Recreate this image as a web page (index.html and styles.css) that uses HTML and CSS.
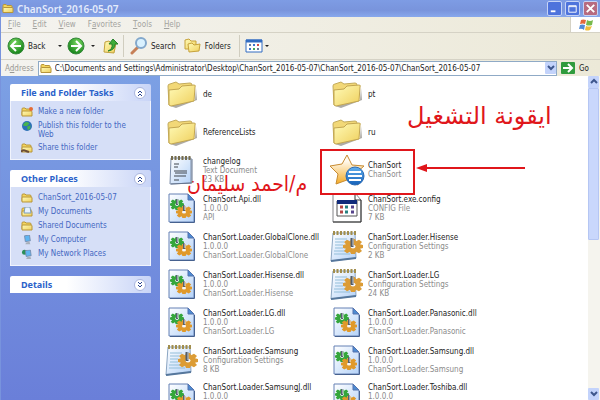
FILE: index.html
```html
<!DOCTYPE html>
<html lang="en">
  <head>
    <meta charset="UTF-8" />
    <title>ChanSort_2016-05-07</title>
    <link rel="stylesheet" href="styles.css">
  </head>
  <body>
    <!-- shared icons -->
    <svg class="defs" aria-hidden="true">
      <defs>
        <linearGradient id="yellow" x1="0" y1="0" x2="1" y2="1">
          <stop offset="0" stop-color="#fffbb8" />
          <stop offset="1" stop-color="#efcf5c" />
        </linearGradient>
        <linearGradient id="paper" x1="0" y1="0" x2="1" y2="1">
          <stop offset="0" stop-color="#ffffff" />
          <stop offset="1" stop-color="#b4d2f8" />
        </linearGradient>
        <radialGradient id="green" cx="0.4" cy="0.3" r="0.7">
          <stop offset="0" stop-color="#7ad860" />
          <stop offset="1" stop-color="#16841a" />
        </radialGradient>
        <linearGradient id="gold" x1="0" y1="0" x2="0" y2="1">
          <stop offset="0.2" stop-color="#fffaf0" />
          <stop offset="1" stop-color="#f5a81c" />
        </linearGradient>
        <linearGradient id="ball" x1="0" y1="0" x2="0" y2="1">
          <stop offset="0" stop-color="#62b0ee" />
          <stop offset="1" stop-color="#1560b8" />
        </linearGradient>
      </defs>
      <symbol id="folder" viewBox="0 0 32 30">
        <path d="M4 27 L29 21 L30 9 L31 21 L10 29Z" fill="#77736a" opacity="0.6" />
        <path d="M3 26 L2 7 Q2 5 4 5 L10 3 L13 5 L24 4 Q26 4 26 6 L27 20Z" fill="#f2d877" stroke="#c3ab5c" />
        <path d="M3 26 L3 11 L13 10 L16 7 L28 6 Q30 6 29 8 L28 22 L5 27Z" fill="url(#yellow)" stroke="#c3a650" />
      </symbol>
      <symbol id="mini-folder" viewBox="0 0 12 10">
        <path d="M1 8 V2 Q1 1 2 1 H4 L5 2 H9 Q10 2 10 3 V4" fill="#f4d55d" stroke="#b8963a" />
        <path d="M1 9 L1 5 Q1 4 2 4 H10 Q11 4 11 5 L11 9Z" fill="url(#yellow)" stroke="#b8963a" />
      </symbol>
      <symbol id="gear" viewBox="-10 -10 20 20" preserveAspectRatio="none">
        <path d="M-2 -10 H2 L3 -7 L6 -9 L9 -6 L7 -3 L10 -2 V2 L7 3 L9 6 L6 9 L3 7 L2 10 H-2 L-3 7 L-6 9 L-9 6 L-7 3 L-10 2 V-2 L-7 -3 L-9 -6 L-6 -9 L-3 -7Z" fill="currentColor" />
        <circle r="2.5" fill="#f5f7fb" />
      </symbol>
      <symbol id="dll" viewBox="0 0 32 30">
        <path d="M3 29 V1 H22 L28 7 V29Z" fill="url(#paper)" stroke="#6480b4" />
        <path d="M22 1 V7 H28Z" fill="#4c8bd2" stroke="#5573ae" />
        <path d="M28.5 8 V29.5 H4" fill="none" stroke="#46618f" />
        <use href="#gear" x="4" y="6" width="14" height="11" color="#35a63c" />
        <use href="#gear" x="10" y="13" width="16" height="12" color="#e0992a" />
        <path d="M11 6 V12 M18 12 V18" stroke="#566171" stroke-width="2" />
        <path d="M12 6 V11 M19 12 V17" stroke="#e4e9ef" />
      </symbol>
      <symbol id="text-file" viewBox="0 0 32 30">
        <path d="M5 3 H25 V28 L4 29Z" fill="url(#paper)" stroke="#7b8ca8" />
        <path d="M26 4 V28 L5 29" fill="none" stroke="#65758f" />
        <path d="M5 3 H26" stroke="#766d4d" stroke-width="4" stroke-dasharray="2 1.5" />
        <path d="M8 9 H13 M8 12 H12 M8 16 H21 M9 18 H21 M8 21 H20 M8 25 H13" stroke="#40464e" />
      </symbol>
      <symbol id="settings-file" viewBox="0 0 36 32">
        <path d="M4 3 H26 L27 28 L2 31Z" fill="url(#paper)" stroke="#8ba5c2" />
        <path d="M2 31 L27 28" stroke="#56779c" stroke-width="2" />
        <path d="M4 3 H27" stroke="#a28e4d" stroke-width="4" stroke-dasharray="2 1.5" />
        <path d="M6 9 H18 M6 12 H15 M6 15 H14 M6 18 H14 M5 21 H16 M5 24 H21" stroke="#93bed9" />
        <use href="#gear" x="14" y="9" width="20" height="15" color="#dc9c35" />
        <path d="M23 8 V17" stroke="#525c68" stroke-width="3" />
        <path d="M24 8 V16" stroke="#cad0d7" />
      </symbol>
      <symbol id="config-file" viewBox="0 0 32 30">
        <path d="M2 29 V0 H24 L30 7 V29Z" fill="#fff" stroke="#85868a" />
        <path d="M24 1 V7 H30 V29 H2" fill="none" stroke="#333" />
        <path d="M6 8 H26 V23 H6Z" fill="#fff" stroke="#555" />
        <path d="M6 9 H26" stroke="#112b7b" stroke-width="4" />
        <path d="M9 14 H12 M9 19 H12" stroke="#b54545" stroke-width="3" />
        <path d="M14 14 H17 M14 19 H17" stroke="#258080" stroke-width="3" />
        <path d="M20 14 H23 M20 19 H23" stroke="#56438c" stroke-width="3" />
      </symbol>
      <symbol id="star" viewBox="0 0 36 32">
        <path d="M18 1 L23 11 L35 12 L26 20 L29 31 L18 26 L7 30 L9 20 L1 12 L13 10Z" fill="url(#gold)" stroke="#c78b31" stroke-linejoin="round" />
        <circle cx="26" cy="22" r="9" fill="url(#ball)" stroke="#2a6ab4" />
        <path d="M20 18 H32 M19 22 H33 M20 26 H32" stroke="#fff" stroke-width="2" />
      </symbol>
      <symbol id="left-arrow" viewBox="0 0 18 18">
        <circle cx="9" cy="9" r="8" fill="url(#green)" stroke="#35883a" />
        <path d="M14 9 H5 M9 4 L4 9 L9 14" fill="none" stroke="#fff" stroke-width="2" />
      </symbol>
      <symbol id="chevrons" viewBox="0 0 12 12">
        <circle cx="6" cy="6" r="5.5" fill="#fff" stroke="#aab5dc" />
        <path d="M4 6 L6 4 L8 6 M4 9 L6 7 L8 9" fill="none" stroke="#27418f" />
      </symbol>
      <symbol id="monitor" viewBox="0 0 12 12">
        <path d="M3 1 L9 0 L10 7 L4 8Z" fill="#5eb5f2" stroke="#7689a8" />
        <path d="M5 9 L9 8 L10 11 H4Z" fill="#a9afb9" />
      </symbol>
    </svg>

    <div class="window">
      <header class="title-bar">
        <svg class="icon-small"><use href="#mini-folder" /></svg>
        <h1>ChanSort_2016-05-07</h1>
        <button class="win-button" aria-label="Minimize"><svg viewBox="0 0 14 14"><path d="M3 10 H8" stroke="#fff" stroke-width="2" /></svg></button>
        <button class="win-button" aria-label="Maximize"><svg viewBox="0 0 14 14"><path d="M3 4 H11 V11 H3Z M3 5 H11" stroke="#fff" fill="none" /></svg></button>
        <button class="win-button close" aria-label="Close"><svg viewBox="0 0 14 14"><path d="M3 3 L11 11 M11 3 L3 11" stroke="#fff" stroke-width="2" /></svg></button>
      </header>

      <nav class="menu-bar">
        <button><u>F</u>ile</button>
        <button><u>E</u>dit</button>
        <button><u>V</u>iew</button>
        <button>F<u>a</u>vorites</button>
        <button><u>T</u>ools</button>
        <button><u>H</u>elp</button>
        <span class="flag">
          <svg viewBox="0 0 16 12">
            <path d="M3 1 Q5 0 8 1 L7 5 Q5 4 2 5Z" fill="#e4683b" />
            <path d="M9 1 Q12 3 15 1 L14 6 Q11 7 8 6Z" fill="#78b94b" />
            <path d="M2 6 Q4 5 7 6 L6 11 Q4 9 1 10Z" fill="#528bd8" />
            <path d="M8 7 Q11 8 14 7 L12 11 Q9 12 7 11Z" fill="#f1bd3a" />
          </svg>
        </span>
      </nav>

      <div class="toolbar">
        <button class="back"><svg class="round"><use href="#left-arrow" /></svg>Back</button>
        <button class="drop" aria-label="Back history"></button>
        <button class="forward" aria-label="Forward"><svg class="round flip"><use href="#left-arrow" /></svg></button>
        <button class="drop" aria-label="Forward history"></button>
        <button class="up" aria-label="Up">
          <svg viewBox="0 0 16 16">
            <path d="M1 14 L2 4 L6 3 L8 5 L13 5 L11 15Z" fill="url(#yellow)" stroke="#c2a13c" />
            <path d="M5 13 Q10 11 9 6 H6 L10 1 L15 6 H12 Q12 12 5 13Z" fill="#3fad39" stroke="#26802b" />
          </svg>
        </button>
        <button class="search">
          <svg viewBox="0 0 18 18">
            <path d="M2 16 L8 10" stroke="#c68058" stroke-width="3" stroke-linecap="round" />
            <circle cx="11" cy="6" r="5" fill="#d9f1ff" stroke="#83a8cc" stroke-width="2" />
          </svg>
          Search
        </button>
        <button class="folders">
          <svg viewBox="0 0 18 16">
            <path d="M1 11 V2 L5 1 L7 3 H12 V11Z" fill="url(#yellow)" stroke="#c6a23b" />
            <path d="M5 14 L4 6 L8 5 L10 7 L16 6 L15 13Z" fill="url(#yellow)" stroke="#c6a23b" />
          </svg>
          Folders
        </button>
        <button class="views" aria-label="Views">
          <svg viewBox="0 0 18 14">
            <path d="M1 1 H17 V13 H1Z" fill="#fff" stroke="#326cc2" />
            <path d="M1 2 H17" stroke="#326cc2" stroke-width="3" />
            <path d="M4 6 H6 M12 10 H14" stroke="#667b99" stroke-width="2" />
            <path d="M8 6 H10 M4 10 H6" stroke="#3a74ce" stroke-width="2" />
            <path d="M12 6 H14" stroke="#cf4c4c" stroke-width="2" />
            <path d="M8 10 H10" stroke="#45a755" stroke-width="2" />
          </svg>
        </button>
        <button class="drop views-drop" aria-label="View options"></button>
      </div>

      <form class="address-bar">
        <label for="address">A<u>d</u>dress</label>
        <div class="address-box">
          <svg class="icon-small"><use href="#mini-folder" /></svg>
          <input id="address" type="text" value="C:\Documents and Settings\Administrator\Desktop\ChanSort_2016-05-07\ChanSort_2016-05-07\ChanSort_2016-05-07">
          <button type="button" class="blue-button" aria-label="Show addresses"><svg viewBox="0 0 8 8"><path d="M1 2 L4 5 L7 2" /></svg></button>
        </div>
        <button type="button" class="go">
          <svg viewBox="0 0 14 12">
            <rect width="14" height="12" rx="1" fill="#2f9b3d" />
            <path d="M2 6 H11 M7 2 L11 6 L7 10" fill="none" stroke="#fff" stroke-width="2" />
          </svg>
          Go
        </button>
      </form>

      <div class="main">
        <aside class="side">
          <section class="panel">
            <header>
              <h2>File and Folder Tasks</h2>
              <button aria-label="Collapse"><svg><use href="#chevrons" /></svg></button>
            </header>
            <ul>
              <li><svg class="icon-small" viewBox="0 0 12 10"><use href="#mini-folder" /><circle cx="10" cy="2" r="2" fill="#e56c35" /></svg><a href="#">Make a new folder</a></li>
              <li><svg class="icon-small" viewBox="0 0 12 12"><circle cx="6" cy="6" r="6" fill="#2c70b8" /><path d="M3 2 Q7 0 9 3 L6 6 L3 6 L1 5Z M6 7 L10 5 L10 9 L7 11Z" fill="#47b34e" /></svg><a href="#">Publish this folder to the Web</a></li>
              <li><svg class="icon-small" viewBox="0 0 12 10"><use href="#mini-folder" /><path d="M0 9 Q2 6 5 8 L8 9" fill="none" stroke="#6c4d36" stroke-width="2" /></svg><a href="#">Share this folder</a></li>
            </ul>
          </section>
          <section class="panel">
            <header>
              <h2>Other Places</h2>
              <button aria-label="Collapse"><svg><use href="#chevrons" /></svg></button>
            </header>
            <ul>
              <li><svg class="icon-small"><use href="#mini-folder" /></svg><a href="#">ChanSort_2016-05-07</a></li>
              <li><svg class="icon-small" viewBox="0 0 12 10"><use href="#mini-folder" /><path d="M4 0 H9 L10 6 H3Z" fill="#e7f3ff" stroke="#7b9ab8" /></svg><a href="#">My Documents</a></li>
              <li><svg class="icon-small"><use href="#mini-folder" /></svg><a href="#">Shared Documents</a></li>
              <li><svg class="icon-small"><use href="#monitor" /></svg><a href="#">My Computer</a></li>
              <li><svg class="icon-small" viewBox="0 0 12 12"><circle cx="3" cy="4" r="3" fill="#2a8f58" /><use href="#monitor" x="1" y="1" width="12" height="12" /></svg><a href="#">My Network Places</a></li>
            </ul>
          </section>
          <section class="panel">
            <header>
              <h2>Details</h2>
              <button class="expand" aria-label="Expand"><svg><use href="#chevrons" /></svg></button>
            </header>
          </section>
        </aside>

        <main class="content">
          <ul class="files">
            <li><svg><use href="#folder" /></svg><p>de</p></li>
            <li><svg><use href="#folder" /></svg><p>pt</p></li>
            <li><svg><use href="#folder" /></svg><p>ReferenceLists</p></li>
            <li><svg><use href="#folder" /></svg><p>ru</p></li>
            <li><svg><use href="#text-file" /></svg><p>changelog<small>Text Document</small><small>23 KB</small></p></li>
            <li class="wide"><svg><use href="#star" /></svg><p>ChanSort<small>ChanSort</small></p></li>
            <li><svg><use href="#dll" /></svg><p>ChanSort.Api.dll<small>1.0.0.0</small><small>API</small></p></li>
            <li><svg><use href="#config-file" /></svg><p>ChanSort.exe.config<small>CONFIG File</small><small>7 KB</small></p></li>
            <li><svg><use href="#dll" /></svg><p>ChanSort.Loader.GlobalClone.dll<small>1.0.0.0</small><small>ChanSort.Loader.GlobalClone</small></p></li>
            <li class="wide"><svg><use href="#settings-file" /></svg><p>ChanSort.Loader.Hisense<small>Configuration Settings</small><small>2 KB</small></p></li>
            <li><svg><use href="#dll" /></svg><p>ChanSort.Loader.Hisense.dll<small>1.0.0.0</small><small>ChanSort.Loader.Hisense</small></p></li>
            <li class="wide"><svg><use href="#settings-file" /></svg><p>ChanSort.Loader.LG<small>Configuration Settings</small><small>24 KB</small></p></li>
            <li><svg><use href="#dll" /></svg><p>ChanSort.Loader.LG.dll<small>1.0.0.0</small><small>ChanSort.Loader.LG</small></p></li>
            <li><svg><use href="#dll" /></svg><p>ChanSort.Loader.Panasonic.dll<small>1.0.0.0</small><small>ChanSort.Loader.Panasonic</small></p></li>
            <li class="wide"><svg><use href="#settings-file" /></svg><p>ChanSort.Loader.Samsung<small>Configuration Settings</small><small>8 KB</small></p></li>
            <li><svg><use href="#dll" /></svg><p>ChanSort.Loader.Samsung.dll<small>1.0.0.0</small><small>ChanSort.Loader.Samsung</small></p></li>
            <li><svg><use href="#dll" /></svg><p>ChanSort.Loader.SamsungJ.dll<small>1.0.0.0</small></p></li>
            <li><svg><use href="#dll" /></svg><p>ChanSort.Loader.Toshiba.dll<small>1.0.0.0</small></p></li>
          </ul>

          <!-- red notes over the file list -->
          <div class="mark"></div>
          <svg class="arrow" viewBox="0 0 110 10"><path d="M10 5 H109" stroke="#e0161b" stroke-width="2" /><path d="M0 5 L11 1 V9Z" fill="#e0161b" /></svg>
          <p class="note run" lang="ar" dir="rtl">ايقونة التشغيل</p>
          <p class="note author" lang="ar" dir="rtl">م/احمد سليمان</p>
        </main>

        <div class="scrollbar">
          <button class="blue-button" aria-label="Scroll up"><svg viewBox="0 0 8 8"><path d="M1 5 L4 2 L7 5" /></svg></button>
          <div class="thumb"></div>
          <button class="blue-button" aria-label="Scroll down"><svg viewBox="0 0 8 8"><path d="M1 2 L4 5 L7 2" /></svg></button>
        </div>
      </div>
    </div>
  </body>
</html>
```

FILE: styles.css
```css
* {
  box-sizing: border-box;
}

body {
  margin: 0;
  font-family: "DejaVu Sans Condensed", "DejaVu Sans", sans-serif;
  font-size: 8px;
  line-height: 9px;
  color: #222;
}

h1, h2, p, ul {
  margin: 0;
  padding: 0;
}

ul {
  list-style: none;
}

button {
  display: flex;
  align-items: center;
  margin: 0;
  padding: 0;
  border: 0;
  background: none;
  color: inherit;
  font: inherit;
}

svg {
  display: block;
  flex: none;
}

.defs {
  position: absolute;
  width: 0;
  height: 0;
}

.icon-small {
  width: 12px;
  height: 11px;
}

.window {
  display: flex;
  flex-direction: column;
  height: 100vh;
  overflow: hidden;
  border-left: 1px solid #7893dd;
  background: #ece9d8;
}

/* title */
.title-bar {
  display: flex;
  align-items: center;
  gap: 3px;
  height: 17px;
  padding: 0 2px 0 1px;
  background: linear-gradient(#7e9ce4, #7994dc 60%, #88a8ec);
}

.title-bar h1 {
  flex: 1;
  color: #e3ebfc;
  font-family: "Noto Sans", sans-serif;
  font-size: 10px;
  font-weight: 600;
  line-height: 16px;
}

.win-button {
  width: 15px;
  height: 15px;
  border: 1px solid #c5d3f6;
  border-radius: 2px;
  background: #4e73dc;
}

.win-button.close {
  background: #b76b80;
}

/* menu */
.menu-bar {
  display: flex;
  align-items: center;
  gap: 12px;
  height: 16px;
  padding-left: 7px;
  border-bottom: 1px solid #d5d2c5;
  background: linear-gradient(90deg, #f4f3ef, #ece9d8);
  color: #a3a39e;
}

.flag {
  display: flex;
  align-items: center;
  justify-content: center;
  width: 30px;
  height: 15px;
  margin-left: auto;
  border-left: 1px solid #d5d2c5;
  background: #fff;
}

.flag svg {
  width: 16px;
  height: 12px;
}

/* toolbar */
.toolbar {
  display: flex;
  align-items: center;
  height: 27px;
  padding-left: 6px;
  border-bottom: 1px solid #d5d2c5;
  background: linear-gradient(90deg, #f4f3ef, #ece9d8);
}

.round {
  width: 18px;
  height: 18px;
}

.flip {
  transform: scaleX(-1);
}

.back {
  gap: 3px;
  width: 45px;
}

.drop {
  width: 15px;
  justify-content: center;
}

.drop::after {
  content: "";
  border: 2px solid transparent;
  border-top-color: #222;
  border-bottom: 0;
}

.up svg {
  width: 16px;
  height: 16px;
}

.up {
  margin-left: 3px;
  width: 20px;
}

.search {
  gap: 3px;
  height: 22px;
  padding-left: 6px;
  border-left: 1px solid #d0cdbf;
}

.search svg {
  width: 18px;
  height: 18px;
}

.folders {
  gap: 3px;
  margin-left: 8px;
}

.folders svg {
  width: 18px;
  height: 16px;
}

.views {
  height: 22px;
  margin-left: 8px;
  padding-left: 5px;
  border-left: 1px solid #d0cdbf;
}

.views svg {
  width: 18px;
  height: 14px;
}

.views-drop {
  width: 8px;
}

/* address */
.address-bar {
  display: flex;
  align-items: center;
  gap: 4px;
  height: 16px;
  padding-left: 4px;
  background: linear-gradient(90deg, #f4f3ef, #ece9d8);
}

.address-bar label {
  color: #9a9994;
}

.address-box {
  display: flex;
  flex: 1;
  align-items: center;
  gap: 3px;
  height: 15px;
  padding-left: 1px;
  border: 1px solid #8faac6;
  background: #fff;
}

.address-box input {
  flex: 1;
  min-width: 0;
  padding: 0;
  border: 0;
  outline: 0;
  background: none;
  color: #222;
  font: inherit;
}

.blue-button {
  justify-content: center;
  width: 11px;
  height: 12px;
  border-radius: 1px;
  background: #c3d3fb;
}

.blue-button svg {
  width: 8px;
  height: 8px;
  fill: none;
  stroke: #3d568c;
  stroke-width: 2;
}

.go {
  gap: 4px;
  width: 39px;
}

.go svg {
  width: 14px;
  height: 12px;
}

/* side panels */
.main {
  display: flex;
  flex: 1;
  min-height: 0;
}

.side {
  display: flex;
  flex-direction: column;
  gap: 10px;
  width: 159px;
  padding: 8px 9px 0;
  background: linear-gradient(#7ca0e4, #6a7fd9);
}

.panel {
  border-radius: 2px 2px 0 0;
  overflow: hidden;
}

.panel header {
  display: flex;
  align-items: center;
  justify-content: space-between;
  height: 17px;
  padding: 0 5px 0 11px;
  background: linear-gradient(90deg, #fff 40%, #c8d4f7);
}

.panel h2 {
  color: #2b62ca;
  font-family: "Noto Sans", sans-serif;
  font-size: 9px;
}

.panel header svg {
  width: 12px;
  height: 12px;
}

.expand {
  transform: scaleY(-1);
}

.panel ul {
  display: flex;
  flex-direction: column;
  gap: 4px;
  padding: 6px 10px;
  border: 1px solid #f1f4fd;
  border-top: 0;
  background: #d6dff7;
}

.panel li {
  display: flex;
  gap: 5px;
}

.panel li svg {
  height: 10px;
}

.panel a {
  color: #4468c2;
  text-decoration: none;
}

/* file list */
.content {
  position: relative;
  flex: 1;
  min-width: 0;
  overflow: hidden;
  background: #fff;
}

.files {
  display: grid;
  grid-template-columns: 165px 165px;
  grid-auto-rows: 38px;
  margin-top: -1px;
}

.files li {
  display: flex;
  align-items: center;
  gap: 5px;
  padding-left: 6px;
  white-space: nowrap;
}

.files svg {
  width: 32px;
  height: 30px;
}

.files .wide {
  gap: 3px;
  padding-left: 4px;
}

.files .wide svg {
  width: 36px;
  height: 32px;
}

.files li:nth-last-child(-n + 2) {
  align-items: flex-start;
  padding-top: 4px;
}

.files small {
  display: block;
  color: #8b8b8b;
  font-size: 8px;
}

/* notes */
.mark {
  position: absolute;
  top: 73px;
  left: 160px;
  width: 95px;
  height: 46px;
  border: 2px solid #e0161b;
}

.arrow {
  position: absolute;
  top: 87px;
  left: 256px;
  width: 110px;
  height: 10px;
}

.note {
  position: absolute;
  color: #e0161b;
  line-height: 28px;
  white-space: nowrap;
}

.run {
  top: 26px;
  left: 247px;
  font-family: "DejaVu Sans", sans-serif;
  font-size: 24px;
}

.author {
  top: 94px;
  left: 27px;
  font-size: 21px;
}

/* scrollbar */
.scrollbar {
  display: flex;
  flex-direction: column;
  width: 12px;
  padding-right: 1px;
  background: #f5f4ee;
}

.thumb {
  height: 152px;
  margin-bottom: auto;
  border: 1px solid #b5c6f3;
  border-radius: 1px;
  background: #c9d7fc;
}
```
